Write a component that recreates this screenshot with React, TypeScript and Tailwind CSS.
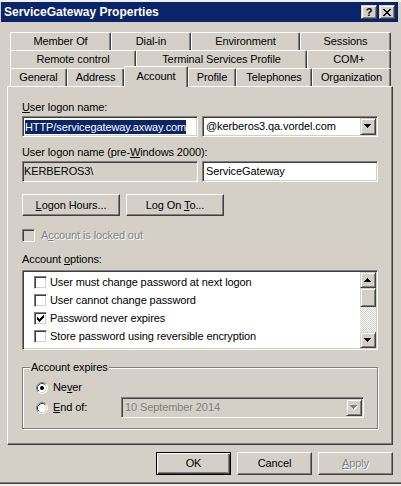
import React from "react";

const raised =
  "border border-t-white border-l-white border-r-[#404040] border-b-[#404040] shadow-[inset_-1px_-1px_0_#808080]";
const sunken =
  "border border-t-[#808080] border-l-[#808080] border-r-white border-b-white shadow-[inset_1px_1px_0_#404040,inset_-1px_-1px_0_#d4d0c8]";
const smallBtn =
  "border border-t-[#d4d0c8] border-l-[#d4d0c8] border-r-[#404040] border-b-[#404040] shadow-[inset_1px_1px_0_#fff,inset_-1px_-1px_0_#808080]";
const disabledText = "text-[#808080] [text-shadow:1px_1px_0_#fff]";

const Arrow = ({ up = false, disabled = false }: { up?: boolean; disabled?: boolean }) => {
  const rows = up ? [3, 2, 1, 0] : [0, 1, 2, 3];
  const bars = (dx: number, fill: string) =>
    rows.map((r, i) => <rect key={fill + i} x={r + dx} y={i + dx} width={7 - r * 2} height={1} fill={fill} />);
  return (
    <svg width="8" height="5" viewBox="0 0 8 5" shapeRendering="crispEdges">
      {disabled && bars(1, "#fff")}
      {bars(0, disabled ? "#808080" : "#000")}
    </svg>
  );
};

const Checkbox = ({ checked = false, disabled = false }: { checked?: boolean; disabled?: boolean }) => (
  <span
    className={`w-[13px] h-[13px] shrink-0 flex items-center justify-center ${sunken} ${
      disabled ? "bg-[#d4d0c8]" : "bg-white"
    }`}
  >
    {checked && (
      <svg width="7" height="7" viewBox="0 0 7 7" shapeRendering="crispEdges">
        {[2, 3, 4, 3, 2, 1, 0].map((y, x) => (
          <rect key={x} x={x} y={y} width={1} height={3} fill="#000" />
        ))}
      </svg>
    )}
  </span>
);

const Radio = ({ checked = false }: { checked?: boolean }) => (
  <svg width="12" height="12" viewBox="0 0 12 12" className="shrink-0">
    <circle cx="6" cy="6" r="5" fill="#fff" />
    <path d="M2.11 9.89A5.5 5.5 0 0 1 9.89 2.11" fill="none" stroke="#808080" />
    <path d="M9.89 2.11A5.5 5.5 0 0 1 2.11 9.89" fill="none" stroke="#fff" />
    <path d="M2.82 9.18A4.5 4.5 0 0 1 9.18 2.82" fill="none" stroke="#404040" />
    <path d="M9.18 2.82A4.5 4.5 0 0 1 2.82 9.18" fill="none" stroke="#d4d0c8" />
    {checked && <circle cx="6" cy="6" r="2" fill="#000" />}
  </svg>
);

const Tab = ({ label, w, selected = false }: { label: string; w: string; selected?: boolean }) => (
  <div
    className={`${w} flex items-center justify-center rounded-t-[2px] border-l border-t border-r border-l-white border-t-white border-r-[#404040] shadow-[inset_-1px_0_0_#808080] ${
      selected ? "relative z-10 h-[21px] -mt-[2px] pb-[2px] bg-[#d4d0c8]" : "h-[18px]"
    }`}
  >
    {label}
  </div>
);

const Button = ({ children, w, isDefault = false }: { children: React.ReactNode; w: string; isDefault?: boolean }) => (
  <div
    className={`${w} flex items-center justify-center ${
      isDefault
        ? "border border-black shadow-[inset_1px_1px_0_#fff,inset_-1px_-1px_0_#404040,inset_-2px_-2px_0_#808080]"
        : raised
    }`}
  >
    {children}
  </div>
);

const options = [
  { label: "User must change password at next logon", checked: false },
  { label: "User cannot change password", checked: false },
  { label: "Password never expires", checked: true },
  { label: "Store password using reversible encryption", checked: false },
];

export default function App() {
  return (
    <div className="w-[401px] h-[486px] overflow-hidden bg-[#d4d0c8] font-['Liberation_Sans',Arial,sans-serif] text-[11px] tracking-[-0.1px] leading-[13px] text-black flex flex-col">
      <div className="h-[2px] bg-[#f0f0f0]" />

      {/* title bar */}
      <div className="ml-[1px] w-[397px] h-[20px] shrink-0 bg-[#0a246a] flex items-center justify-between pl-[3px] pr-[3px]">
        <span className="text-white font-bold text-[12px] tracking-normal">ServiceGateway Properties</span>
        <div className="flex gap-[2px]">
          <div className={`w-[16px] h-[14px] bg-[#d4d0c8] flex items-center justify-center font-bold text-[11px] leading-[11px] ${smallBtn}`}>
            ?
          </div>
          <div className={`w-[16px] h-[14px] bg-[#d4d0c8] flex items-center justify-center ${smallBtn}`}>
            <svg width="8" height="7" viewBox="0 0 8 7" shapeRendering="crispEdges">
              {[0, 1, 2, 3, 2, 1, 0].map((o, y) => (
                <g key={y} fill="#000">
                  <rect x={o} y={y} width={2} height={1} />
                  <rect x={6 - o} y={y} width={2} height={1} />
                </g>
              ))}
            </svg>
          </div>
        </div>
      </div>

      {/* tabs */}
      <div className="mt-[10px] pl-[10px] flex flex-col">
        <div className="flex">
          <Tab label="Member Of" w="w-[101px]" />
          <Tab label="Dial-in" w="w-[80px]" />
          <Tab label="Environment" w="w-[109px]" />
          <Tab label="Sessions" w="w-[91px]" />
        </div>
        <div className="flex">
          <Tab label="Remote control" w="w-[126px]" />
          <Tab label="Terminal Services Profile" w="w-[171px]" />
          <Tab label="COM+" w="w-[84px]" />
        </div>
        <div className="flex h-[18px] items-start">
          <Tab label="General" w="w-[57px]" />
          <Tab label="Address" w="w-[57px]" />
          <Tab label="Account" w="w-[64px]" selected />
          <Tab label="Profile" w="w-[48px]" />
          <Tab label="Telephones" w="w-[76px]" />
          <Tab label="Organization" w="w-[79px]" />
        </div>
      </div>

      {/* panel */}
      <div className={`ml-[7px] w-[386px] h-[359px] shrink-0 pt-[14px] px-[14px] flex flex-col ${raised}`}>
        <div>
          <u>U</u>ser logon name:
        </div>
        <div className="mt-[2px] flex gap-[4px]">
          <div className={`w-[176px] h-[21px] bg-white flex items-center pl-[2px] ${sunken}`}>
            <span className="bg-[#0a246a] text-white leading-[14px]">HTTP/servicegateway.axway.com</span>
          </div>
          <div className={`w-[176px] h-[21px] bg-white flex items-center justify-between pl-[3px] pr-[1px] ${sunken}`}>
            <span>@kerberos3.qa.vordel.com</span>
            <div className={`w-[16px] h-[17px] bg-[#d4d0c8] flex items-center justify-center ${smallBtn}`}>
              <Arrow />
            </div>
          </div>
        </div>

        <div className="mt-[9px]">
          User logon name (pre-<u>W</u>indows 2000):
        </div>
        <div className="mt-[2px] flex gap-[4px]">
          <div className={`w-[176px] h-[21px] bg-[#d4d0c8] flex items-center pl-[1px] ${sunken}`}>KERBEROS3\</div>
          <div className={`w-[176px] h-[21px] bg-white flex items-center pl-[3px] ${sunken}`}>ServiceGateway</div>
        </div>

        <div className="mt-[12px] flex gap-[6px]">
          <Button w="w-[98px] h-[22px]">
            <span>
              <u>L</u>ogon Hours...
            </span>
          </Button>
          <Button w="w-[98px] h-[22px]">
            <span>
              Log On <u>T</u>o...
            </span>
          </Button>
        </div>

        <div className="mt-[13px] flex items-center gap-[6px] h-[13px]">
          <Checkbox disabled />
          <span className={disabledText}>
            A<u>c</u>count is locked out
          </span>
        </div>

        <div className="mt-[11px]">
          Account <u>o</u>ptions:
        </div>
        <div className={`mt-[4px] h-[80px] bg-white flex ${sunken}`}>
          <div className="flex-1 pt-[2px] pl-[11px]">
            {options.map((o) => (
              <div key={o.label} className="h-[18px] flex items-center gap-[3px]">
                <Checkbox checked={o.checked} />
                <span>{o.label}</span>
              </div>
            ))}
          </div>
          <div className="w-[16px] mr-[1px] my-[1px] flex flex-col">
            <div className={`h-[16px] bg-[#d4d0c8] flex items-center justify-center ${smallBtn}`}>
              <Arrow up />
            </div>
            <div className={`h-[19px] bg-[#d4d0c8] ${smallBtn}`} />
            <div className="flex-1 bg-[repeating-conic-gradient(#d4d0c8_0_25%,#fff_0_50%)] bg-[length:2px_2px]" />
            <div className={`h-[16px] bg-[#d4d0c8] flex items-center justify-center ${smallBtn}`}>
              <Arrow />
            </div>
          </div>
        </div>

        <div className="mt-[17px] h-[62px] border border-[#808080] shadow-[inset_1px_1px_0_#fff,1px_1px_0_#fff] flex flex-col pl-[13px]">
          <div className="-mt-[7px] -ml-[6px] w-fit px-[1px] bg-[#d4d0c8]">Account expires</div>
          <div className="mt-[7px] h-[13px] flex items-center gap-[5px]">
            <Radio checked />
            <span>
              Ne<u>v</u>er
            </span>
          </div>
          <div className="mt-[3px] h-[21px] flex items-center">
            <div className="w-[85px] flex items-center gap-[5px]">
              <Radio />
              <span>
                <u>E</u>nd of:
              </span>
            </div>
            <div className={`w-[243px] h-[21px] bg-[#d4d0c8] flex items-center justify-between pl-[3px] pr-[1px] ${sunken}`}>
              <span className="text-[#808080]">10 September 2014</span>
              <div className={`w-[16px] h-[17px] bg-[#d4d0c8] flex items-center justify-center ${smallBtn}`}>
                <Arrow disabled />
              </div>
            </div>
          </div>
        </div>
      </div>

      {/* dialog buttons */}
      <div className="mt-[7px] ml-[156px] flex gap-[6px]">
        <Button w="w-[75px] h-[23px]" isDefault>
          OK
        </Button>
        <Button w="w-[75px] h-[23px]">Cancel</Button>
        <Button w="w-[75px] h-[23px]">
          <span className={disabledText}>
            <u>A</u>pply
          </span>
        </Button>
      </div>

      <div className="mt-[7px] h-[1px] bg-[#808080]" />
      <div className="h-[1px] bg-[#404040]" />
      <div className="h-[2px] bg-[#f0f0f0]" />
    </div>
  );
}
